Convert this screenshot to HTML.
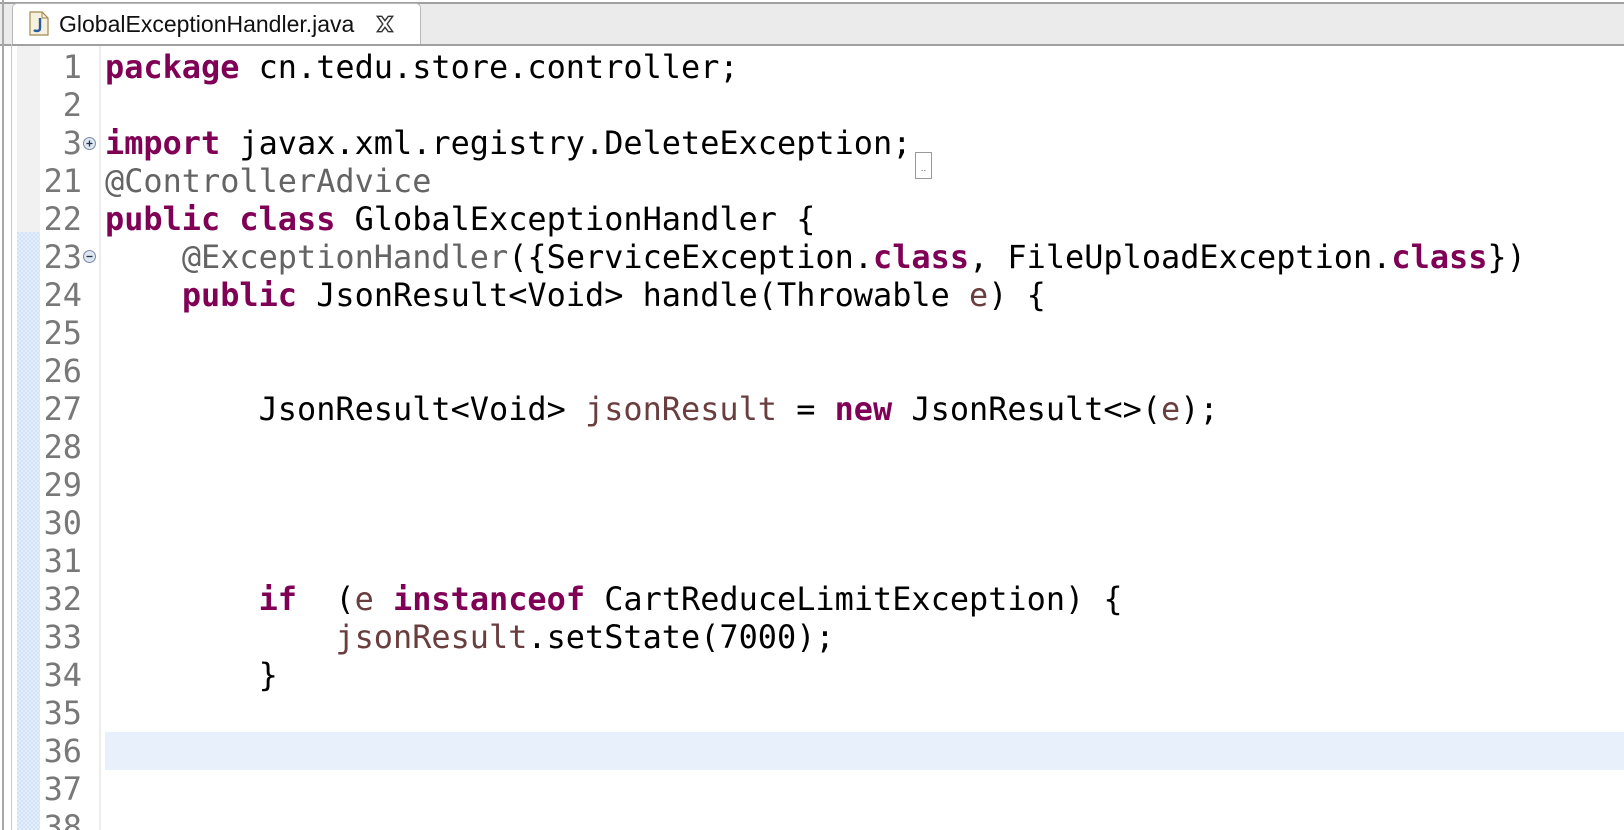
<!DOCTYPE html>
<html><head><meta charset="utf-8"><style>
html,body{margin:0;padding:0;width:1624px;height:830px;overflow:hidden;background:#fff;position:relative;font-family:"Liberation Sans",sans-serif}
.tabbar{position:absolute;left:0;top:2px;width:1624px;background:#ebebeb;border-top:2px solid #a0a0a0;border-bottom:2px solid #a0a0a0;box-sizing:border-box;height:44px}
.tab{position:absolute;left:12px;top:3px;width:409px;height:41px;background:#fff;border:1px solid #b8b8b8;border-bottom:none;border-radius:5px 5px 0 0;box-sizing:border-box}
.tab .t{position:absolute;left:46px;top:7px;font-size:23px;color:#111}
.lb1{position:absolute;left:2px;top:0;width:2px;height:830px;background:#a8a8a8}
.lb2{position:absolute;left:11px;top:44px;width:1px;height:786px;background:#c8c8c8}
.strip{position:absolute;left:17px;top:46px;width:23px;height:784px;background:#f1f1f1}
.strip2{position:absolute;left:17px;top:232px;width:23px;height:600px;background-color:#d4e3f7;background-image:linear-gradient(45deg,#e4eefb 25%,transparent 25%,transparent 75%,#e4eefb 75%),linear-gradient(45deg,#e4eefb 25%,transparent 25%,transparent 75%,#e4eefb 75%);background-size:4px 4px;background-position:0 0,2px 2px}
.sep{position:absolute;left:99px;top:46px;width:2px;height:784px;background:#ececec}
.hl{position:absolute;left:105px;top:732px;width:1519px;height:38px;background:#e8f0fb}
.row{position:absolute;left:0;height:38px;line-height:38px;margin-top:2px;font-family:"DejaVu Sans Mono","Liberation Mono",monospace;font-size:31.9px;white-space:pre;color:#000}
.n{position:absolute;left:20px;width:62px;color:#787878;text-align:right}
.c{position:absolute;left:105px}
.k{color:#7f0055;font-weight:bold}
.a{color:#646464}
.v{color:#6a3e3e}
.fold{position:absolute;left:83px;width:13px;height:13px;border-radius:50%;border:1px solid #7a8aa8;background:#dfe6f0;box-sizing:border-box}
</style></head><body>
<div class="tabbar"></div>
<div class="tab">
<svg style="position:absolute;left:16px;top:7px" width="20" height="25" viewBox="0 0 20 25"><path d="M1 1h12l6 6v17H1z" fill="#f6f1dc" stroke="#a08850" stroke-width="1.2"/><path d="M13 1v6h6" fill="none" stroke="#a08850" stroke-width="1"/><path d="M11 7v10q0 3-3 3q-2 0-3-1" fill="none" stroke="#2a5aa0" stroke-width="2.4"/></svg>
<span class="t">GlobalExceptionHandler.java</span>
<svg style="position:absolute;left:361px;top:9px" width="22" height="22" viewBox="0 0 20 20"><path d="M3 3l4 0l3 4l3-4l4 0l-5 7l5 7l-4 0l-3-4l-3 4l-4 0l5-7z" fill="none" stroke="#333" stroke-width="1.3"/></svg>
</div>
<div class="lb1"></div><div class="lb2"></div>
<div class="strip"></div><div class="strip2"></div>
<div class="sep"></div>
<div class="hl"></div>

<div class="row" style="top:46px"><span class="n">1</span><span class="c"><span class="k">package</span> cn.tedu.store.controller;</span></div>
<div class="row" style="top:84px"><span class="n">2</span></div>
<div class="row" style="top:122px"><span class="n">3</span><span class="c"><span class="k">import</span> javax.xml.registry.DeleteException;</span></div>
<div style="position:absolute;left:915px;top:152px;width:17px;height:27px;border:1px solid #999;box-sizing:border-box;font-size:10px;line-height:32px;color:#666;text-align:center">..</div>
<div class="fold" style="top:137px"><svg width="11" height="11" style="position:absolute;left:0;top:0"><path d="M2.5 5.5h6M5.5 2.5v6" stroke="#203050" stroke-width="1.3"/></svg></div>
<div class="row" style="top:160px"><span class="n">21</span><span class="c a">@ControllerAdvice</span></div>
<div class="row" style="top:198px"><span class="n">22</span><span class="c"><span class="k">public</span> <span class="k">class</span> GlobalExceptionHandler {</span></div>
<div class="row" style="top:236px"><span class="n">23</span><span class="c">    <span class="a">@ExceptionHandler</span>({ServiceException.<span class="k">class</span>, FileUploadException.<span class="k">class</span>})</span></div>
<div class="fold" style="top:250px"><svg width="11" height="11" style="position:absolute;left:0;top:0"><path d="M2.5 5.5h6" stroke="#203050" stroke-width="1.3"/></svg></div>
<div class="row" style="top:274px"><span class="n">24</span><span class="c">    <span class="k">public</span> JsonResult&lt;Void&gt; handle(Throwable <span class="v">e</span>) {</span></div>
<div class="row" style="top:312px"><span class="n">25</span></div>
<div class="row" style="top:350px"><span class="n">26</span></div>
<div class="row" style="top:388px"><span class="n">27</span><span class="c">        JsonResult&lt;Void&gt; <span class="v">jsonResult</span> = <span class="k">new</span> JsonResult&lt;&gt;(<span class="v">e</span>);</span></div>
<div class="row" style="top:426px"><span class="n">28</span></div>
<div class="row" style="top:464px"><span class="n">29</span></div>
<div class="row" style="top:502px"><span class="n">30</span></div>
<div class="row" style="top:540px"><span class="n">31</span></div>
<div class="row" style="top:578px"><span class="n">32</span><span class="c">        <span class="k">if</span>  (<span class="v">e</span> <span class="k">instanceof</span> CartReduceLimitException) {</span></div>
<div class="row" style="top:616px"><span class="n">33</span><span class="c">            <span class="v">jsonResult</span>.setState(7000);</span></div>
<div class="row" style="top:654px"><span class="n">34</span><span class="c">        }</span></div>
<div class="row" style="top:692px"><span class="n">35</span></div>
<div class="row" style="top:730px"><span class="n">36</span></div>
<div class="row" style="top:768px"><span class="n">37</span></div>
<div class="row" style="top:806px"><span class="n">38</span></div>
</body></html>
